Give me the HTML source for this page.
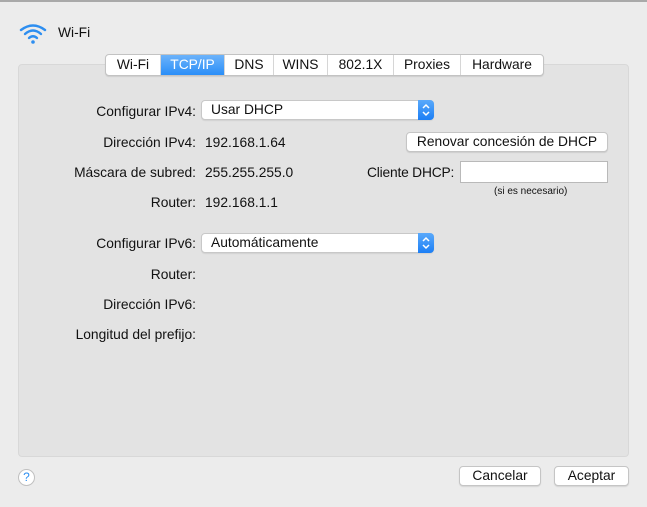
<!DOCTYPE html><html><head><style>
body{margin:0;width:647px;height:507px;background:#ececec;font-family:"Liberation Sans",sans-serif;font-size:13.8px;color:#111;position:relative;overflow:hidden}
.a{position:absolute;white-space:nowrap}
.r{text-align:right;width:200px;left:-4px}
.panel{position:absolute;left:18px;top:64px;width:611px;height:393px;background:#e3e3e3;border:1px solid #d8d8d8;border-radius:4px;box-sizing:border-box}
.tabs{position:absolute;left:105px;top:54px;height:20px;display:flex;background:#fff;border:1px solid #c3c3c3;border-radius:4px;overflow:hidden;box-shadow:0 1px 1px rgba(0,0,0,.1)}
.tabs div{padding:0;height:20px;line-height:20px;text-align:center;border-left:1px solid #d6d6d6}
.tabs div:first-child{border-left:0}
.tabs .s{background:linear-gradient(#6cb3fa,#2a8ef8);color:#fff}
.pop{position:absolute;height:20px;background:#fff;border:1px solid #c8c8c8;border-radius:4px;box-sizing:border-box;line-height:18px;padding-left:9px;box-shadow:0 1px 1px rgba(0,0,0,.08)}
.pop .ar{position:absolute;right:-1px;top:-1px;width:16px;height:20px;background:linear-gradient(#5aa9fb,#1c7ff5);border-radius:0 4px 4px 0}
.btn{position:absolute;height:20px;background:#fff;border:1px solid #c5c5c5;border-radius:4px;box-sizing:border-box;text-align:center;line-height:18px;box-shadow:0 1px 1px rgba(0,0,0,.1)}
</style></head><body>
<div class="a" style="left:0;top:0;width:647px;height:2px;background:#a9a9a9"></div>
<svg class="a" style="left:18px;top:22px" width="30" height="24" viewBox="0 0 30 24"><g fill="none" stroke="#2d8ef0" stroke-width="2.4" stroke-linecap="round"><path d="M3 8 Q15 -1 27 8"/><path d="M7 12 Q15 5 23 12"/><path d="M11 16 Q15 12.5 19 16"/></g><circle cx="15" cy="20" r="1.8" fill="#2d8ef0"/></svg>
<div class="a" style="left:58px;top:25px">Wi-Fi</div>
<div class="panel"></div>
<div class="tabs">
<div style="width:54px">Wi-Fi</div><div class="s" style="width:63px">TCP/IP</div><div style="width:48px">DNS</div><div style="width:53px">WINS</div><div style="width:65px">802.1X</div><div style="width:66px">Proxies</div><div style="width:82px">Hardware</div></div>
<div class="a r" style="top:104px">Configurar IPv4:</div>
<div class="pop" style="left:201px;top:100px;width:233px">Usar DHCP<div class="ar"><svg width="16" height="20"><path d="M5 8 L8 5 L11 8 M5 12 L8 15 L11 12" stroke="#fff" stroke-width="1.5" fill="none"/></svg></div></div>
<div class="a r" style="top:135px">Dirección IPv4:</div><div class="a" style="left:205px;top:135px">192.168.1.64</div>
<div class="a r" style="top:165px">Máscara de subred:</div><div class="a" style="left:205px;top:165px">255.255.255.0</div>
<div class="a r" style="top:195px">Router:</div><div class="a" style="left:205px;top:195px">192.168.1.1</div>
<div class="btn" style="left:406px;top:132px;width:202px">Renovar concesión de DHCP</div>
<div class="a" style="left:367px;top:165px;letter-spacing:-0.2px">Cliente DHCP:</div>
<div class="a" style="left:460px;top:161px;width:148px;height:22px;background:#fff;border:1px solid #b9b9b9;box-sizing:border-box"></div>
<div class="a" style="left:494px;top:186px;font-size:10px">(si es necesario)</div>
<div class="a r" style="top:236px">Configurar IPv6:</div>
<div class="pop" style="left:201px;top:233px;width:233px">Automáticamente<div class="ar"><svg width="16" height="20"><path d="M5 8 L8 5 L11 8 M5 12 L8 15 L11 12" stroke="#fff" stroke-width="1.5" fill="none"/></svg></div></div>
<div class="a r" style="top:267px">Router:</div>
<div class="a r" style="top:297px">Dirección IPv6:</div>
<div class="a r" style="top:327px">Longitud del prefijo:</div>
<div class="a" style="left:18px;top:469px;width:17px;height:17px;border-radius:50%;background:#fff;border:1px solid #c0c0c0;box-sizing:border-box;color:#2d8ef0;text-align:center;line-height:15px;font-size:12px">?</div>
<div class="btn" style="left:459px;top:466px;width:82px">Cancelar</div>
<div class="btn" style="left:554px;top:466px;width:75px">Aceptar</div>
</body></html>
